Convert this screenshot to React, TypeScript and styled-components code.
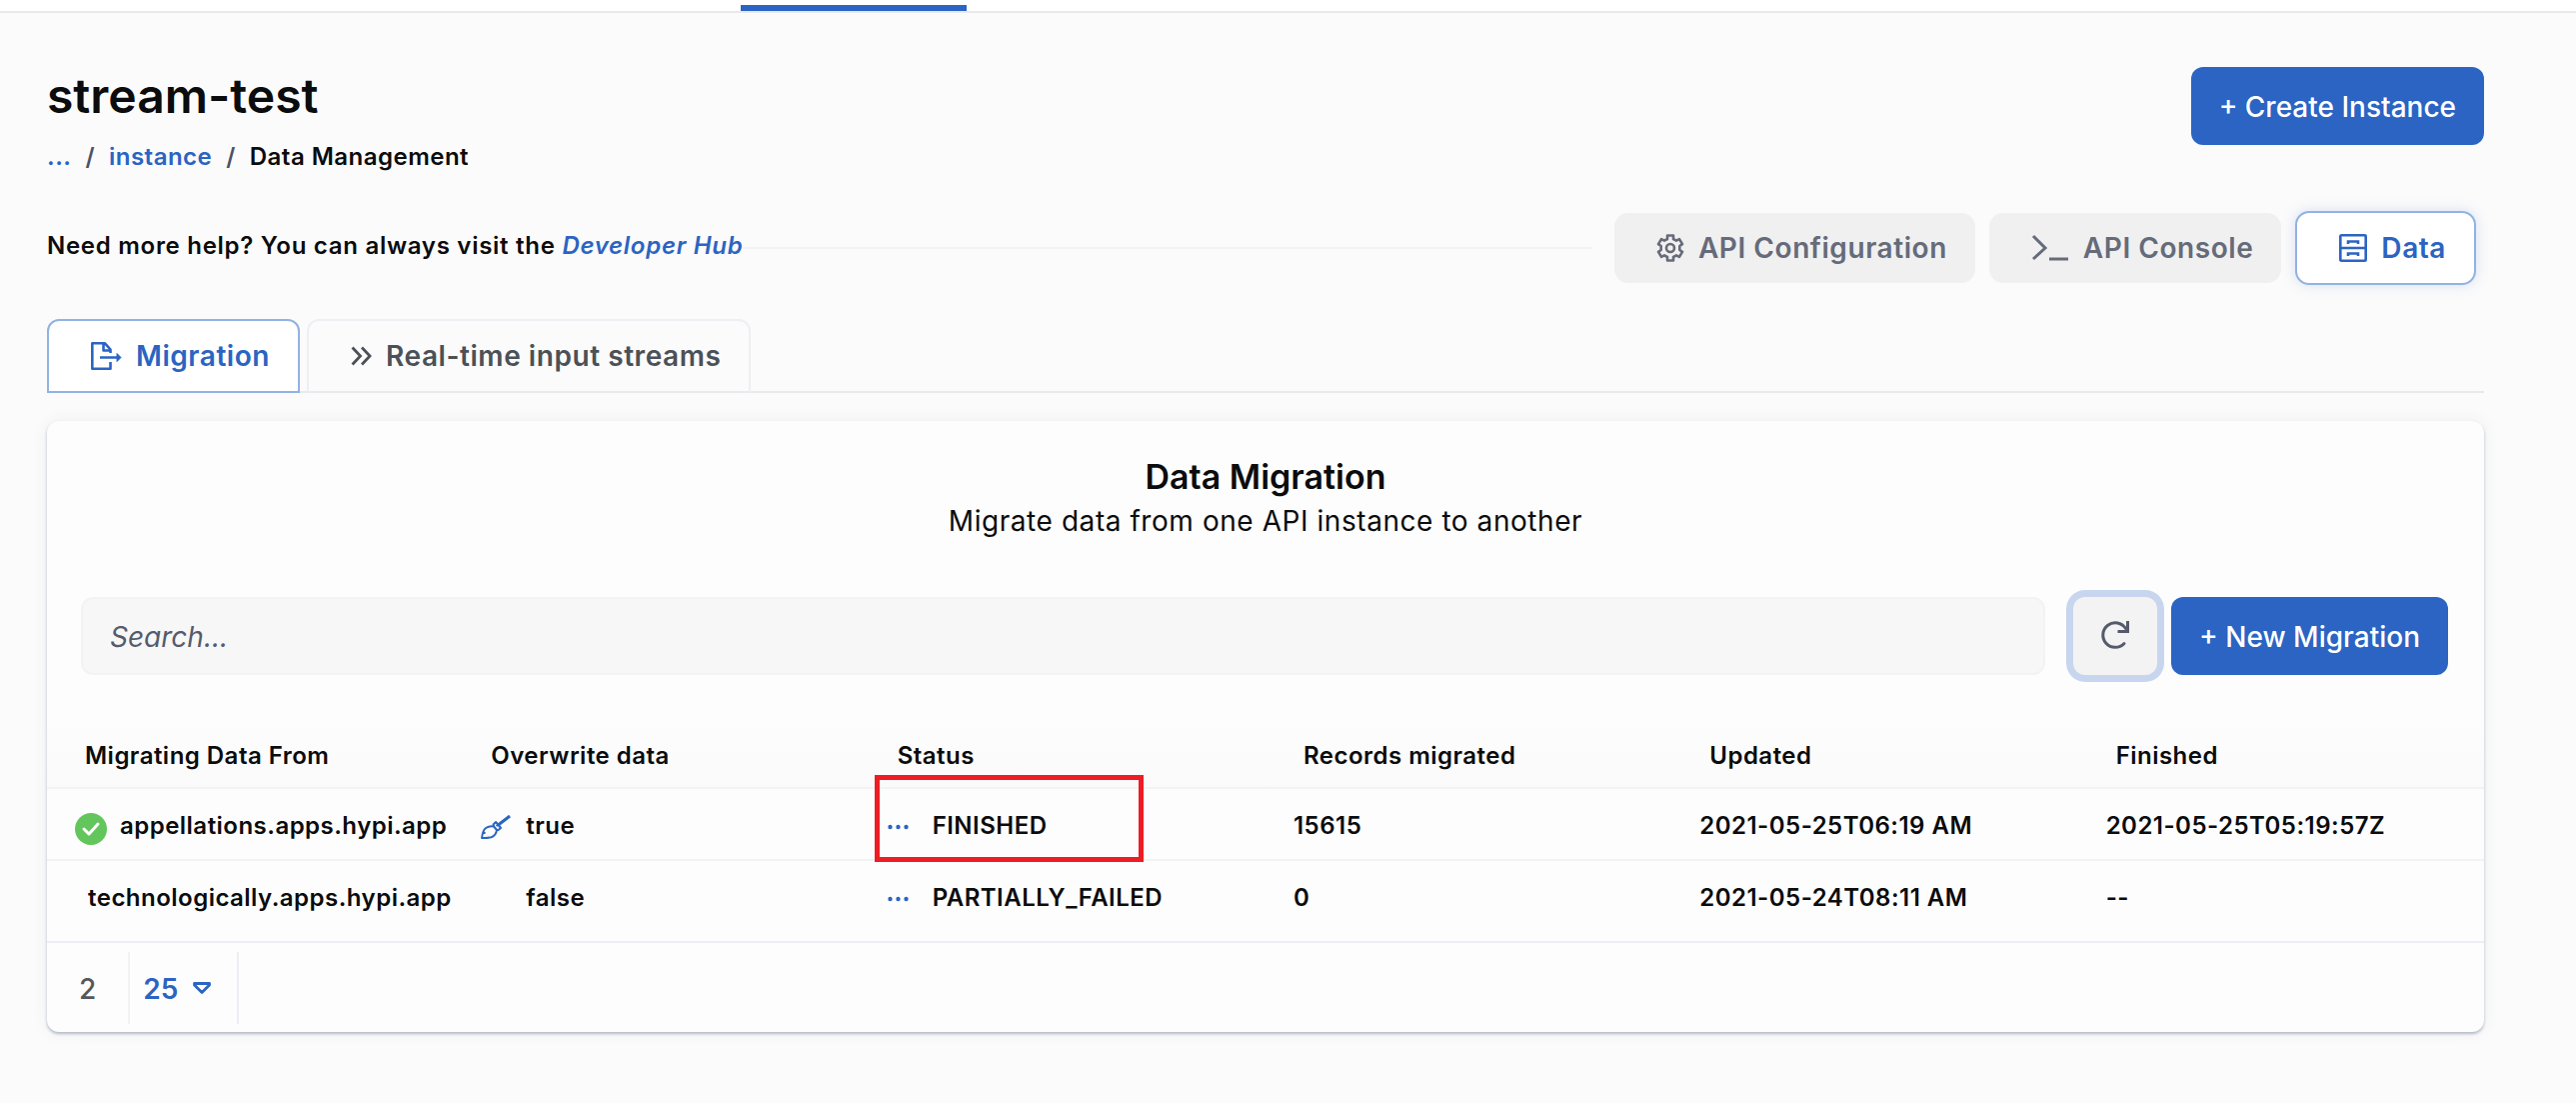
import React from "react";
import styled, { createGlobalStyle, css } from "styled-components";

const blue = "#2b64c2";
const softBlue = "#92b2e3";
const ink = "#0b0c0d";
const line = "#f2f3f4";

const Global = createGlobalStyle`
  * { box-sizing: border-box; }
  body { margin: 0; background: #fbfbfb; color: ${ink}; font-family: Inter, "Liberation Sans", sans-serif; font-size: 24px; line-height: 32px; }
  button, input, select { font: inherit; color: inherit; }
  h1, h2, p { margin: 0; }
`;

const TopNav = styled.nav`
  height: 13px;
  padding-left: 741px;
  display: flex;
  align-items: flex-end;
  background: #fff;
  border-bottom: 2px solid #e9e9e9;
`;
const ActiveMark = styled.span`
  width: 226px;
  height: 6px;
  background: ${blue};
`;
const Page = styled.main`
  padding: 54px 92px 70px 47px;
`;
const Header = styled.header`
  display: flex;
  justify-content: space-between;
  align-items: flex-start;
`;
const Title = styled.h1`
  font-size: 48px;
  line-height: 58px;
  font-weight: 600;
`;
const Crumbs = styled.nav`
  display: flex;
  gap: 14px;
  margin-top: 16px;
  font-weight: 600;
  letter-spacing: 0.02em;
`;
const Link = styled.a<{ $italic?: boolean }>`
  color: ${blue};
  text-decoration: none;
  font-style: ${(p) => (p.$italic ? "italic" : "normal")};
`;
const Slash = styled.span`
  color: #4c5264;
`;
const Primary = styled.button`
  height: 78px;
  padding: 2px 28px 0;
  border: 0;
  border-radius: 12px;
  background: ${blue};
  color: #fff;
  font-size: 28px;
  font-weight: 500;
  white-space: nowrap;
`;
const HelpRow = styled.div`
  display: flex;
  align-items: center;
  margin: 38px 8px 34px 0;
`;
const Help = styled.p`
  padding-bottom: 4px;
  font-weight: 600;
  letter-spacing: 0.03em;
`;
const Rule = styled.hr`
  flex: 1;
  height: 2px;
  margin: 0 22px 0 0;
  border: 0;
  background: #f3f3f3;
`;
const ModeGroup = styled.div`
  display: flex;
  align-items: center;
  gap: 14px;
`;
const Mode = styled.button<{ $active?: boolean }>`
  display: flex;
  align-items: center;
  gap: 14px;
  height: 70px;
  padding: 0 28px 0 42px;
  border: 0;
  border-radius: 14px;
  background: #f0f0f0;
  color: #666b7a;
  font-size: 28px;
  font-weight: 600;
  letter-spacing: 0.02em;
  ${(p) =>
    p.$active &&
    css`
      height: 74px;
      border: 2px solid ${softBlue};
      background: #fff;
      color: ${blue};
      box-shadow: 0 0 14px rgba(43, 100, 194, 0.18);
    `}
`;
const Tabs = styled.div`
  display: flex;
  gap: 7px;
  border-bottom: 2px solid #e9eaee;
`;
const Tab = styled.button<{ $active?: boolean }>`
  display: flex;
  align-items: center;
  gap: 14px;
  height: 74px;
  margin-bottom: -2px;
  padding: 0 28px 0 42px;
  border: 2px solid #eeeff2;
  border-bottom-color: #e9eaee;
  border-radius: 12px 12px 0 0;
  background: transparent;
  color: #4b5158;
  font-size: 28px;
  font-weight: 600;
  letter-spacing: 0.02em;
  ${(p) =>
    p.$active &&
    css`
      border-color: ${softBlue};
      border-radius: 12px 12px 0 0;
      background: #fff;
      color: ${blue};
    `}
`;
const Card = styled.section`
  margin-top: 28px;
  border-radius: 12px;
  background: #fdfdfd;
  box-shadow: 0 2px 3px rgba(60, 75, 110, 0.35), 0 0 16px rgba(60, 75, 110, 0.07);
`;
const CardHead = styled.div`
  padding: 36px 0 52px;
  text-align: center;
`;
const CardTitle = styled.h2`
  font-size: 34px;
  line-height: 40px;
  font-weight: 600;
`;
const CardText = styled.p`
  font-size: 28px;
  line-height: 48px;
  letter-spacing: 0.02em;
`;
const Toolbar = styled.div`
  display: flex;
  padding: 0 36px 0 34px;
`;
const Search = styled.input`
  flex: 1;
  min-width: 0;
  height: 78px;
  margin-right: 28px;
  padding: 2px 27px 0;
  border: 2px solid #f3f3f3;
  border-radius: 12px;
  background: #f7f7f7;
  font-size: 28px;
  &::placeholder { color: #555b6b; font-style: italic; opacity: 1; }
`;
const Refresh = styled.button`
  display: grid;
  place-items: center;
  width: 84px;
  height: 78px;
  margin-right: 14px;
  padding: 0;
  border: 0;
  border-radius: 12px;
  background: #f3f3f3;
  color: #555b6b;
  box-shadow: 0 0 0 7px #c7d6ee;
`;
const Table = styled.table`
  width: 100%;
  margin-top: 46px;
  table-layout: fixed;
  border-collapse: separate;
  border-spacing: 0;
`;
const Th = styled.th`
  height: 68px;
  padding: 3px 0 0 38px;
  border-bottom: 2px solid ${line};
  background: linear-gradient(#fdfdfd, #fafafa);
  text-align: left;
  font-weight: 600;
  letter-spacing: 0.02em;
`;
const Td = styled.td<{ $last?: boolean }>`
  height: ${(p) => (p.$last ? 82 : 72)}px;
  padding: ${(p) => (p.$last ? "3px 0 10px 28px" : "3px 0 0 28px")};
  border-bottom: 2px solid ${(p) => (p.$last ? "#eceef3" : line)};
  font-weight: 600;
  letter-spacing: 0.02em;
  white-space: nowrap;
`;
const Cell = styled.div`
  position: relative;
  display: flex;
  align-items: center;
`;
const Slot = styled.span<{ $w: number; $drop?: boolean }>`
  display: flex;
  flex: none;
  width: ${(p) => p.$w}px;
  padding-top: ${(p) => (p.$drop ? 6 : 2)}px;
  color: ${blue};
`;
const Highlight = styled.span`
  position: absolute;
  left: -13px;
  top: -35px;
  width: 269px;
  height: 87px;
  border: 5px solid #ee1c25;
`;
const Footer = styled.footer`
  display: flex;
  padding: 9px 0 8px;
  font-size: 28px;
`;
const Count = styled.span`
  display: flex;
  align-items: center;
  height: 72px;
  padding: 2px 32px 0;
  color: #55585c;
  font-weight: 500;
  border-right: 2px solid #f1f2f4;
`;
const SizePick = styled.label`
  display: flex;
  align-items: center;
  gap: 14px;
  height: 72px;
  padding: 0 26px 0 13px;
  border-right: 2px solid #eceef3;
  color: ${blue};
`;
const Size = styled.select`
  appearance: none;
  padding: 2px 0 0;
  border: 0;
  background: none;
  color: ${blue};
  font-size: 28px;
  font-weight: 600;
`;

const Gear = () => (
  <svg width="28" height="28" viewBox="0 0 28 28" fill="none" stroke="currentColor" strokeWidth="2.600" strokeLinejoin="round" aria-hidden="true">
    <path d="M11 1.500h6v3.500l3 1.700 3-1.500 3 5-2.700 1.800v4l2.700 1.800-3 5-3-1.500-3 1.700v3.500h-6V23l-3-1.700-3 1.500-3-5L4.700 16v-4L2 10.200l3-5 3 1.500L11 5z" />
    <circle cx="14" cy="14" r="4" />
  </svg>
);
const Prompt = () => (
  <svg width="38" height="28" viewBox="0 0 38 28" fill="none" stroke="currentColor" strokeWidth="3" aria-hidden="true">
    <path d="M2 2l12 12L2 25M18 25h19" />
  </svg>
);
const Drawers = () => (
  <svg width="28" height="28" viewBox="0 0 28 28" fill="none" stroke="currentColor" strokeWidth="2.600" aria-hidden="true">
    <rect x="1.300" y="1.300" width="25.400" height="25.400" rx="1" />
    <path d="M1 14h26M9 10V7.500h10V10M9 22v-2.500h10V22" />
  </svg>
);
const Export = () => (
  <svg width="31" height="28" viewBox="0 0 31 28" fill="none" stroke="currentColor" strokeWidth="2.600" strokeLinejoin="round" aria-hidden="true">
    <path d="M19.500 11V7.500L14 1.300H1.300v25.400h18.200V20M12.500 1.500V8.500h7M9 15.500h17" />
    <path d="M26 11.500l4 4-4 4z" fill="currentColor" strokeWidth="1" />
  </svg>
);
const Chevrons = () => (
  <svg width="21" height="20" viewBox="0 0 21 20" fill="none" stroke="currentColor" strokeWidth="2.800" aria-hidden="true">
    <path d="M1.500 1.500L9.500 10l-8 8.500M11 1.500L19 10l-8 8.500" />
  </svg>
);
const Reload = () => (
  <svg width="30" height="32" viewBox="0 0 30 32" fill="none" stroke="currentColor" strokeWidth="3" strokeLinecap="round" aria-hidden="true">
    <path d="M24 23.500A12.300 12.300 0 1 1 25.500 8.500" />
    <path d="M27.500 1v10.500H17.500" strokeLinecap="butt" />
  </svg>
);
const Check = () => (
  <svg width="32" height="32" viewBox="0 0 32 32" fill="none" aria-hidden="true">
    <circle cx="16" cy="16" r="16" fill="#63c65c" />
    <path d="M9 16l5 5 9-10" stroke="#fff" strokeWidth="3" strokeLinecap="round" strokeLinejoin="round" />
  </svg>
);
const Brush = () => (
  <svg width="30" height="24" viewBox="0 0 30 24" fill="none" stroke="currentColor" strokeWidth="2" strokeLinejoin="round" aria-hidden="true">
    <path d="M1 23c.5-4 1-8 4-10 2.500-1.600 5-2 8-1.500l3 3.500c-.5 3-2 6-5.500 7.200C7.500 23 4 23 1 23zM3 17.500l1.500 1" />
    <path d="M13 11.500l-.5-2L15 7l5 6-2.500 2-1.500 0M15.500 11l3-2" />
    <path d="M18 9.500L29 1" strokeWidth="3" />
  </svg>
);
const Dots = () => (
  <svg width="21" height="6" viewBox="0 0 21 6" fill="currentColor" aria-hidden="true">
    <circle cx="2.500" cy="3" r="2.200" />
    <circle cx="10.500" cy="3" r="2.200" />
    <circle cx="18.500" cy="3" r="2.200" />
  </svg>
);
const Caret = () => (
  <svg width="18" height="12" viewBox="0 0 18 12" fill="none" stroke="currentColor" strokeWidth="2.800" strokeLinejoin="round" aria-hidden="true">
    <path d="M1.500 1.500h15v1.500L9 10.500 1.500 3z" />
  </svg>
);

const columns = ["Migrating Data From", "Overwrite data", "Status", "Records migrated", "Updated", "Finished"];
const rows = [
  { from: "appellations.apps.hypi.app", done: true, overwrite: true, status: "FINISHED", records: 15615, updated: "2021-05-25T06:19 AM", finished: "2021-05-25T05:19:57Z" },
  { from: "technologically.apps.hypi.app", done: false, overwrite: false, status: "PARTIALLY_FAILED", records: 0, updated: "2021-05-24T08:11 AM", finished: "--" },
];

export default function App() {
  return (
    <>
      <Global />
      <TopNav><ActiveMark /></TopNav>
      <Page>
        <Header>
          <div>
            <Title>stream-test</Title>
            <Crumbs aria-label="Breadcrumb">
              <Link href="#">...</Link>
              <Slash>/</Slash>
              <Link href="#instance">instance</Link>
              <Slash>/</Slash>
              <span>Data Management</span>
            </Crumbs>
          </div>
          <Primary type="button">+ Create Instance</Primary>
        </Header>
        <HelpRow>
          <Help>
            Need more help? You can always visit the <Link $italic href="#hub">Developer Hub</Link>
          </Help>
          <Rule />
          <ModeGroup>
            <Mode type="button"><Gear />API Configuration</Mode>
            <Mode type="button"><Prompt />API Console</Mode>
            <Mode type="button" $active><Drawers />Data</Mode>
          </ModeGroup>
        </HelpRow>
        <Tabs role="tablist">
          <Tab type="button" role="tab" aria-selected $active><Export />Migration</Tab>
          <Tab type="button" role="tab"><Chevrons />Real-time input streams</Tab>
        </Tabs>
        <Card>
          <CardHead>
            <CardTitle>Data Migration</CardTitle>
            <CardText>Migrate data from one API instance to another</CardText>
          </CardHead>
          <Toolbar>
            <Search type="search" placeholder="Search..." aria-label="Search" />
            <Refresh type="button" aria-label="Refresh"><Reload /></Refresh>
            <Primary type="button">+ New Migration</Primary>
          </Toolbar>
          <Table>
            <thead>
              <tr>{columns.map((c) => <Th key={c} scope="col">{c}</Th>)}</tr>
            </thead>
            <tbody>
              {rows.map((r, i) => {
                const last = i === rows.length - 1;
                return (
                  <tr key={r.from}>
                    <Td $last={last}><Cell><Slot $w={r.done ? 45 : 13} $drop>{r.done && <Check />}</Slot>{r.from}</Cell></Td>
                    <Td $last={last}><Cell><Slot $w={45}>{r.overwrite && <Brush />}</Slot>{String(r.overwrite)}</Cell></Td>
                    <Td $last={last}><Cell><Slot $w={45}><Dots /></Slot>{r.status}{r.done && <Highlight />}</Cell></Td>
                    <Td $last={last}>{r.records}</Td>
                    <Td $last={last}>{r.updated}</Td>
                    <Td $last={last}>{r.finished}</Td>
                  </tr>
                );
              })}
            </tbody>
          </Table>
          <Footer>
            <Count>2</Count>
            <SizePick>
              <Size aria-label="Rows per page" defaultValue="25"><option>25</option></Size>
              <Caret />
            </SizePick>
          </Footer>
        </Card>
      </Page>
    </>
  );
}
